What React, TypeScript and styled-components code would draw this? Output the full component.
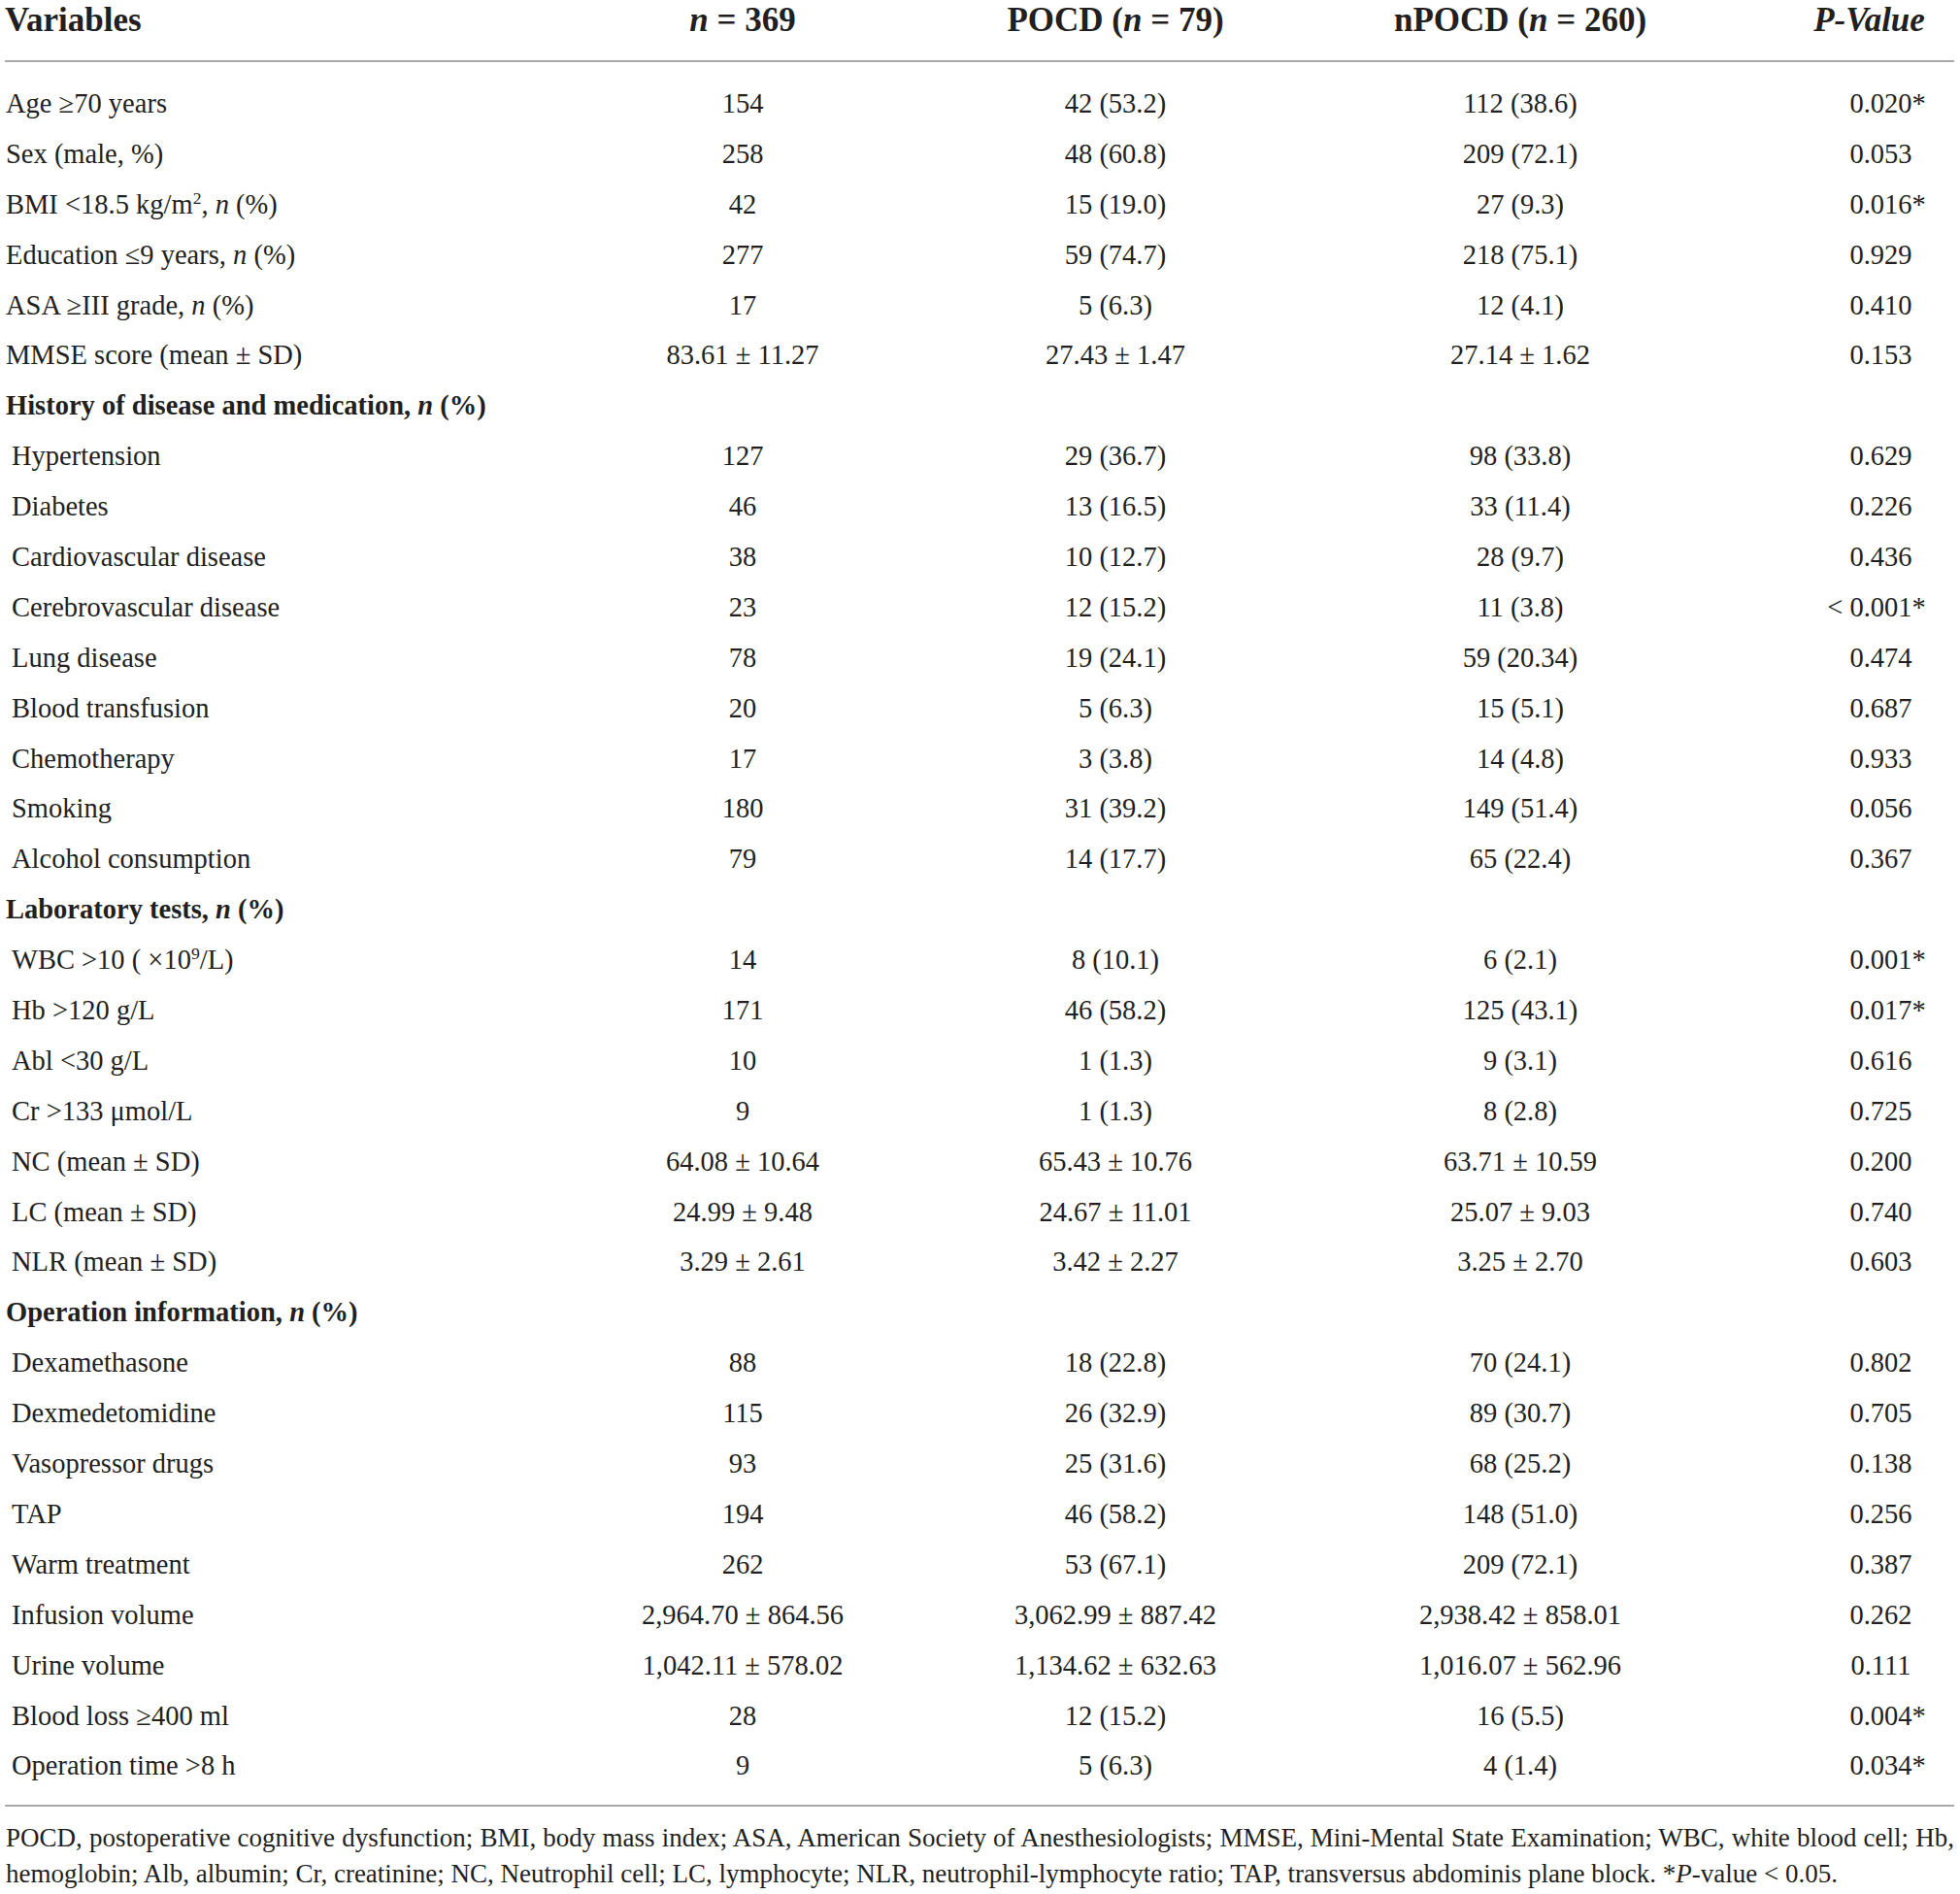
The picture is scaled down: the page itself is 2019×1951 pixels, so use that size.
import React from 'react'
import styled, { createGlobalStyle } from 'styled-components'

const GlobalStyle = createGlobalStyle`
  html, body {
    margin: 0;
    padding: 0;
    background: #fff;
  }
  body {
    font-family: "Liberation Serif", "Times New Roman", serif;
    color: #231f20;
  }
`

const COLUMNS = '497px 526px 242px 592px 151px'

const Page = styled.div`
  width: 2008px;
  padding-left: 5px;
`

const Table = styled.div`
  display: flex;
  flex-direction: column;
`

const HeadRow = styled.div`
  display: grid;
  grid-template-columns: ${COLUMNS};
  padding: 1px 0 21px;
  border-bottom: 2px solid #a9a9a9;
  font-size: 35px;
  line-height: 40px;
  font-weight: 700;
`

const HeadCell = styled.div<{ $left?: boolean; $shift?: number }>`
  text-align: ${p => (p.$left ? 'left' : 'center')};
  padding-right: ${p => p.$shift ?? 0}px;
  white-space: nowrap;
`

const Body = styled.div`
  display: flex;
  flex-direction: column;
  padding: 17px 0 14px;
  border-bottom: 2px solid #a9a9a9;
`

const Row = styled.div`
  display: grid;
  grid-template-columns: ${COLUMNS};
  height: 51.9px;
  align-items: center;
  font-size: 28.5px;
  line-height: 51.9px;
`

const Label = styled.div<{ $indent?: boolean; $section?: boolean }>`
  padding-left: ${p => (p.$indent ? '7px' : '1px')};
  font-weight: ${p => (p.$section ? 700 : 400)};
  white-space: nowrap;
`

const Cell = styled.div`
  text-align: center;
  white-space: nowrap;
`

/* a zero-width box so "< " and "*" hang outside the centred number */
const Hang = styled.span<{ $side: 'left' | 'right' }>`
  display: inline-flex;
  width: 0;
  justify-content: ${p => (p.$side === 'left' ? 'flex-end' : 'flex-start')};
  white-space: pre;
`

const Footnote = styled.p`
  margin: 14px 0 0;
  padding-left: 1px;
  font-size: 27px;
  line-height: 37px;
  text-align: justify;
`

const Sup = styled.sup`
  font-size: 0.62em;
  line-height: 0;
  vertical-align: 0.55em;
`

type Item = {
  label: React.ReactNode
  indent?: boolean
  section?: boolean
  values?: [string, string, string, string]
}

const n = <i>n</i>

const rows: Item[] = [
  { label: <>Age ≥70 years</>, values: ['154', '42 (53.2)', '112 (38.6)', '0.020*'] },
  { label: <>Sex (male, %)</>, values: ['258', '48 (60.8)', '209 (72.1)', '0.053'] },
  { label: <>BMI &lt;18.5 kg/m<Sup>2</Sup>, {n} (%)</>, values: ['42', '15 (19.0)', '27 (9.3)', '0.016*'] },
  { label: <>Education ≤9 years, {n} (%)</>, values: ['277', '59 (74.7)', '218 (75.1)', '0.929'] },
  { label: <>ASA ≥III grade, {n} (%)</>, values: ['17', '5 (6.3)', '12 (4.1)', '0.410'] },
  { label: <>MMSE score (mean ± SD)</>, values: ['83.61 ± 11.27', '27.43 ± 1.47', '27.14 ± 1.62', '0.153'] },
  { label: <>History of disease and medication, {n} (%)</>, section: true },
  { label: 'Hypertension', indent: true, values: ['127', '29 (36.7)', '98 (33.8)', '0.629'] },
  { label: 'Diabetes', indent: true, values: ['46', '13 (16.5)', '33 (11.4)', '0.226'] },
  { label: 'Cardiovascular disease', indent: true, values: ['38', '10 (12.7)', '28 (9.7)', '0.436'] },
  { label: 'Cerebrovascular disease', indent: true, values: ['23', '12 (15.2)', '11 (3.8)', '< 0.001*'] },
  { label: 'Lung disease', indent: true, values: ['78', '19 (24.1)', '59 (20.34)', '0.474'] },
  { label: 'Blood transfusion', indent: true, values: ['20', '5 (6.3)', '15 (5.1)', '0.687'] },
  { label: 'Chemotherapy', indent: true, values: ['17', '3 (3.8)', '14 (4.8)', '0.933'] },
  { label: 'Smoking', indent: true, values: ['180', '31 (39.2)', '149 (51.4)', '0.056'] },
  { label: 'Alcohol consumption', indent: true, values: ['79', '14 (17.7)', '65 (22.4)', '0.367'] },
  { label: <>Laboratory tests, {n} (%)</>, section: true },
  { label: <>WBC &gt;10 ( ×10<Sup>9</Sup>/L)</>, indent: true, values: ['14', '8 (10.1)', '6 (2.1)', '0.001*'] },
  { label: <>Hb &gt;120 g/L</>, indent: true, values: ['171', '46 (58.2)', '125 (43.1)', '0.017*'] },
  { label: <>Abl &lt;30 g/L</>, indent: true, values: ['10', '1 (1.3)', '9 (3.1)', '0.616'] },
  { label: <>Cr &gt;133 μmol/L</>, indent: true, values: ['9', '1 (1.3)', '8 (2.8)', '0.725'] },
  { label: 'NC (mean ± SD)', indent: true, values: ['64.08 ± 10.64', '65.43 ± 10.76', '63.71 ± 10.59', '0.200'] },
  { label: 'LC (mean ± SD)', indent: true, values: ['24.99 ± 9.48', '24.67 ± 11.01', '25.07 ± 9.03', '0.740'] },
  { label: 'NLR (mean ± SD)', indent: true, values: ['3.29 ± 2.61', '3.42 ± 2.27', '3.25 ± 2.70', '0.603'] },
  { label: <>Operation information, {n} (%)</>, section: true },
  { label: 'Dexamethasone', indent: true, values: ['88', '18 (22.8)', '70 (24.1)', '0.802'] },
  { label: 'Dexmedetomidine', indent: true, values: ['115', '26 (32.9)', '89 (30.7)', '0.705'] },
  { label: 'Vasopressor drugs', indent: true, values: ['93', '25 (31.6)', '68 (25.2)', '0.138'] },
  { label: 'TAP', indent: true, values: ['194', '46 (58.2)', '148 (51.0)', '0.256'] },
  { label: 'Warm treatment', indent: true, values: ['262', '53 (67.1)', '209 (72.1)', '0.387'] },
  { label: 'Infusion volume', indent: true, values: ['2,964.70 ± 864.56', '3,062.99 ± 887.42', '2,938.42 ± 858.01', '0.262'] },
  { label: 'Urine volume', indent: true, values: ['1,042.11 ± 578.02', '1,134.62 ± 632.63', '1,016.07 ± 562.96', '0.111'] },
  { label: <>Blood loss ≥400 ml</>, indent: true, values: ['28', '12 (15.2)', '16 (5.5)', '0.004*'] },
  { label: <>Operation time &gt;8 h</>, indent: true, values: ['9', '5 (6.3)', '4 (1.4)', '0.034*'] },
]

const PValue = ({ value }: { value: string }) => {
  const prefix = value.startsWith('< ') ? '< ' : ''
  const suffix = value.endsWith('*') ? '*' : ''
  const core = value.slice(prefix.length, value.length - suffix.length)
  return (
    <Cell>
      {prefix && <Hang $side="left">{prefix}</Hang>}
      {core}
      {suffix && <Hang $side="right">{suffix}</Hang>}
    </Cell>
  )
}

const App = () => {
  return (
    <Page>
      <GlobalStyle />
      <Table>
        <HeadRow>
          <HeadCell $left>Variables</HeadCell>
          <HeadCell><i>n</i> = 369</HeadCell>
          <HeadCell>POCD (<i>n</i> = 79)</HeadCell>
          <HeadCell>nPOCD (<i>n</i> = 260)</HeadCell>
          <HeadCell $shift={24}><i>P-Value</i></HeadCell>
        </HeadRow>
        <Body>
          {rows.map((r, i) => (
            <Row key={i}>
              <Label $indent={r.indent} $section={r.section}>{r.label}</Label>
              {r.values ? (
                <>
                  <Cell>{r.values[0]}</Cell>
                  <Cell>{r.values[1]}</Cell>
                  <Cell>{r.values[2]}</Cell>
                  <PValue value={r.values[3]} />
                </>
              ) : null}
            </Row>
          ))}
        </Body>
      </Table>
      <Footnote>
        POCD, postoperative cognitive dysfunction; BMI, body mass index; ASA, American Society of
        Anesthesiologists; MMSE, Mini-Mental State Examination; WBC, white blood cell; Hb,
        hemoglobin; Alb, albumin; Cr, creatinine; NC, Neutrophil cell; LC, lymphocyte; NLR,
        neutrophil-lymphocyte ratio; TAP, transversus abdominis plane block. *<i>P</i>-value &lt; 0.05.
      </Footnote>
    </Page>
  )
}

export default App
